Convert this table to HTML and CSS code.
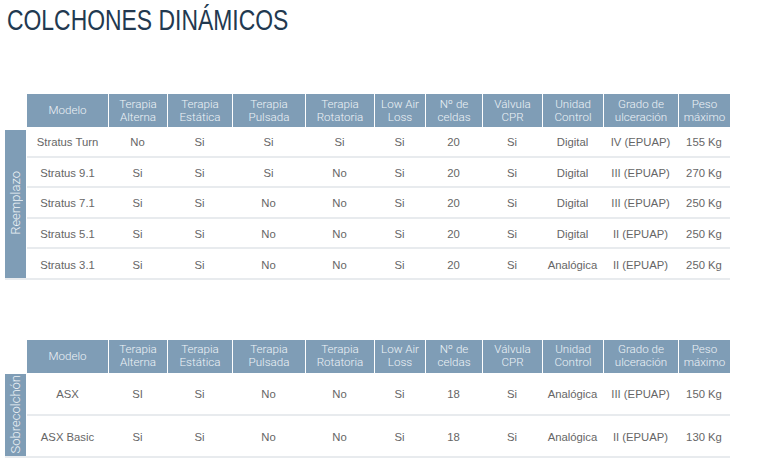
FILE: index.html
```html
<!DOCTYPE html>
<html lang="es">
<head>
<meta charset="utf-8">
<title>Colchones dinámicos</title>
<link rel="stylesheet" href="styles.css">
</head>
<body>
<div class="page">
  <h1 class="title"><span class="title-text">COLCHONES DINÁMICOS</span></h1>

  <table class="spec spec-first">
    <colgroup>
      <col class="c-side"><col class="c-model"><col class="c-alt"><col class="c-est"><col class="c-pul"><col class="c-rot"><col class="c-low"><col class="c-cel"><col class="c-val"><col class="c-uni"><col class="c-gra"><col class="c-pes">
    </colgroup>
    <thead>
      <tr>
        <th class="blank"></th>
        <th>Modelo</th>
        <th>Terapia<br>Alterna</th>
        <th>Terapia<br>Estática</th>
        <th>Terapia<br>Pulsada</th>
        <th>Terapia<br>Rotatoria</th>
        <th>Low Air<br>Loss</th>
        <th>Nº de<br>celdas</th>
        <th>Válvula<br>CPR</th>
        <th>Unidad<br>Control</th>
        <th>Grado de<br>ulceración</th>
        <th>Peso<br>máximo</th>
      </tr>
    </thead>
    <tbody>
      <tr>
        <td class="side" rowspan="5"><span class="side-label">Reemplazo</span></td>
        <td>Stratus Turn</td><td>No</td><td>Si</td><td>Si</td><td>Si</td><td>Si</td><td>20</td><td>Si</td><td>Digital</td><td>IV (EPUAP)</td><td>155 Kg</td>
      </tr>
      <tr>
        <td>Stratus 9.1</td><td>Si</td><td>Si</td><td>Si</td><td>No</td><td>Si</td><td>20</td><td>Si</td><td>Digital</td><td>III (EPUAP)</td><td>270 Kg</td>
      </tr>
      <tr>
        <td>Stratus 7.1</td><td>Si</td><td>Si</td><td>No</td><td>No</td><td>Si</td><td>20</td><td>Si</td><td>Digital</td><td>III (EPUAP)</td><td>250 Kg</td>
      </tr>
      <tr>
        <td>Stratus 5.1</td><td>Si</td><td>Si</td><td>No</td><td>No</td><td>Si</td><td>20</td><td>Si</td><td>Digital</td><td>II (EPUAP)</td><td>250 Kg</td>
      </tr>
      <tr>
        <td>Stratus 3.1</td><td>Si</td><td>Si</td><td>No</td><td>No</td><td>Si</td><td>20</td><td>Si</td><td>Analógica</td><td>II (EPUAP)</td><td>250 Kg</td>
      </tr>
    </tbody>
  </table>

  <table class="spec spec-second">
    <colgroup>
      <col class="c-side"><col class="c-model"><col class="c-alt"><col class="c-est"><col class="c-pul"><col class="c-rot"><col class="c-low"><col class="c-cel"><col class="c-val"><col class="c-uni"><col class="c-gra"><col class="c-pes">
    </colgroup>
    <thead>
      <tr>
        <th class="blank"></th>
        <th>Modelo</th>
        <th>Terapia<br>Alterna</th>
        <th>Terapia<br>Estática</th>
        <th>Terapia<br>Pulsada</th>
        <th>Terapia<br>Rotatoria</th>
        <th>Low Air<br>Loss</th>
        <th>Nº de<br>celdas</th>
        <th>Válvula<br>CPR</th>
        <th>Unidad<br>Control</th>
        <th>Grado de<br>ulceración</th>
        <th>Peso<br>máximo</th>
      </tr>
    </thead>
    <tbody>
      <tr>
        <td class="side" rowspan="2"><span class="side-label">Sobrecolchón</span></td>
        <td>ASX</td><td>SI</td><td>Si</td><td>No</td><td>No</td><td>Si</td><td>18</td><td>Si</td><td>Analógica</td><td>III (EPUAP)</td><td>150 Kg</td>
      </tr>
      <tr>
        <td>ASX Basic</td><td>Si</td><td>Si</td><td>No</td><td>No</td><td>Si</td><td>18</td><td>Si</td><td>Analógica</td><td>II (EPUAP)</td><td>130 Kg</td>
      </tr>
    </tbody>
  </table>
</div>
</body>
</html>
```

FILE: styles.css
```css
html, body {
  margin: 0;
  padding: 0;
  background: #ffffff;
}

.page {
  padding: 4px 0 0 5px;
  font-family: "Liberation Sans", Arial, sans-serif;
}

.title {
  margin: 0 0 0 2px;
  font-family: "Liberation Sans", Arial, sans-serif;
  font-weight: normal;
  font-size: 29px;
  line-height: 32px;
  color: #223950;
  white-space: nowrap;
}

.title-text {
  display: inline-block;
  transform: scaleX(0.79);
  transform-origin: left center;
}

.spec {
  table-layout: fixed;
  width: 725px;
  border-collapse: separate;
  border-spacing: 0;
  font-size: 11.3px;
  color: #666666;
}

.spec-first {
  margin-top: 58px;
}

.spec-second {
  margin-top: 60px;
}

.c-side { width: 22px; }
.c-model { width: 81px; }
.c-alt { width: 59px; }
.c-est { width: 65px; }
.c-pul { width: 73px; }
.c-rot { width: 69px; }
.c-low { width: 51px; }
.c-cel { width: 57px; }
.c-val { width: 60px; }
.c-uni { width: 61px; }
.c-gra { width: 75px; }
.c-pes { width: 52px; }

.spec th {
  height: 33px;
  padding: 0;
  background: #7f9db6;
  color: #eef3f7;
  font-family: Roboto, "Liberation Sans", sans-serif;
  font-weight: 300;
  font-size: 11.6px;
  line-height: 13px;
  text-align: center;
  vertical-align: middle;
  border-left: 1px solid #ffffff;
  white-space: nowrap;
}

.spec th:nth-child(2) {
  border-left: none;
}

.spec th.blank {
  background: transparent;
  border: none;
}

.spec td {
  padding: 2px 0 0 0;
  text-align: center;
  vertical-align: middle;
  border-bottom: 2px solid #e8ebee;
  white-space: nowrap;
}

.spec-first tbody tr {
  height: 30.6px;
}

.spec-second tbody tr {
  height: 42.6px;
}

.spec td.side {
  padding: 3px 1px 0 0;
  background: #7f9db6;
  background-clip: content-box;
  border-bottom: 2px solid #e8ebee;
  text-align: center;
}

.spec-second td.side {
  padding-top: 1px;
}

.side-label {
  display: inline-block;
  writing-mode: vertical-rl;
  transform: rotate(180deg);
  font-family: Roboto, "Liberation Sans", sans-serif;
  font-weight: 300;
  font-size: 13px;
  line-height: 21px;
  color: #eef3f7;
  white-space: nowrap;
}
```
